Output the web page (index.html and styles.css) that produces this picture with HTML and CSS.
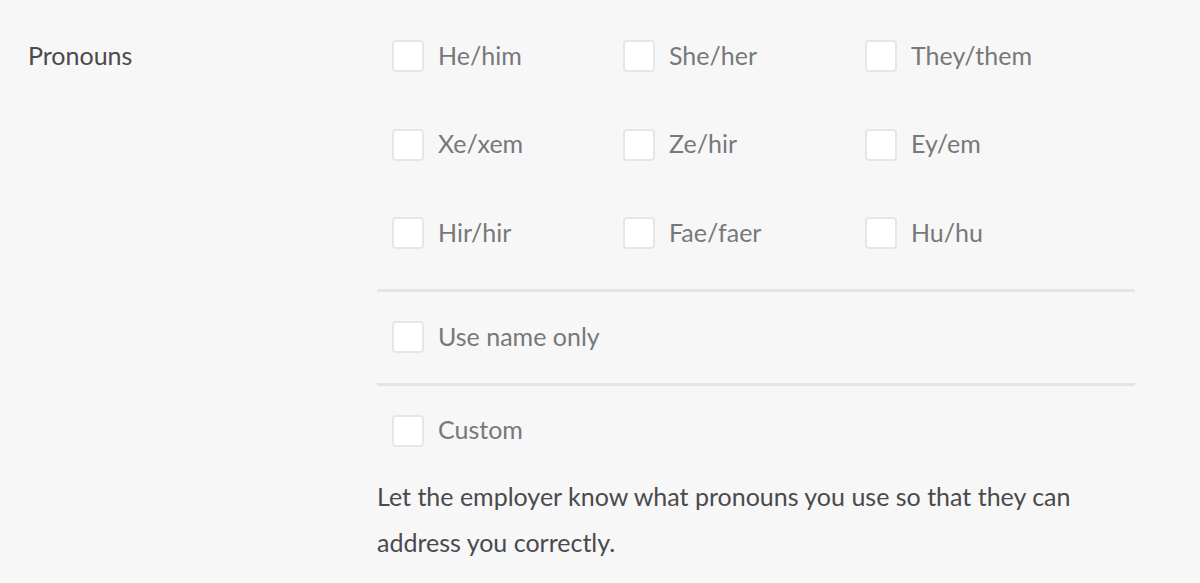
FILE: index.html
```html
<!DOCTYPE html>
<html>
<head>
<meta charset="utf-8">
<link rel="stylesheet" href="styles.css">
</head>
<body>
<div class="field">
  <div class="field-label">Pronouns</div>
  <div class="field-body">
    <div class="grid">
      <label class="option"><span class="box"></span><span class="text">He/him</span></label>
      <label class="option"><span class="box"></span><span class="text">She/her</span></label>
      <label class="option"><span class="box"></span><span class="text">They/them</span></label>
      <label class="option"><span class="box"></span><span class="text">Xe/xem</span></label>
      <label class="option"><span class="box"></span><span class="text">Ze/hir</span></label>
      <label class="option"><span class="box"></span><span class="text">Ey/em</span></label>
      <label class="option"><span class="box"></span><span class="text">Hir/hir</span></label>
      <label class="option"><span class="box"></span><span class="text">Fae/faer</span></label>
      <label class="option"><span class="box"></span><span class="text">Hu/hu</span></label>
    </div>
    <div class="divider"></div>
    <div class="single">
      <label class="option"><span class="box"></span><span class="text">Use name only</span></label>
    </div>
    <div class="divider"></div>
    <div class="single">
      <label class="option"><span class="box"></span><span class="text">Custom</span></label>
    </div>
    <p class="hint">Let the employer know what pronouns you use so that they can address you correctly.</p>
  </div>
</div>
</body>
</html>
```
FILE: styles.css
```css
html, body {
  margin: 0;
  padding: 0;
  background: #f7f7f7;
}
body {
  font-family: Lato, "Open Sans", sans-serif;
  font-size: 25px;
  color: #4a4a4a;
}
.field {
  display: flex;
  padding-left: 28px;
}
.field-label {
  width: 349px;
  flex: none;
  padding-top: 39px;
  line-height: 32px;
  color: #4a4a4d;
}
.field-body {
  width: 758px;
  flex: none;
}
.grid {
  display: grid;
  grid-template-columns: 231px 242px 1fr;
  row-gap: 56.5px;
  padding: 40px 0 40px 15px;
}
.option {
  display: flex;
  align-items: center;
  gap: 14px;
  height: 32px;
}
.box {
  width: 28px;
  height: 28px;
  border: 2px solid #e6e6e6;
  border-radius: 4px;
  background: #fff;
  flex: none;
}
.text {
  color: #78787a;
  line-height: 32px;
  padding-bottom: 3px;
}
.divider {
  height: 3px;
  background: #e4e4e8;
}
.single {
  padding: 29px 0 29.5px 15px;
}
.hint {
  margin: -3px 0 0;
  line-height: 46px;
  color: #4a4a4d;
}
```
